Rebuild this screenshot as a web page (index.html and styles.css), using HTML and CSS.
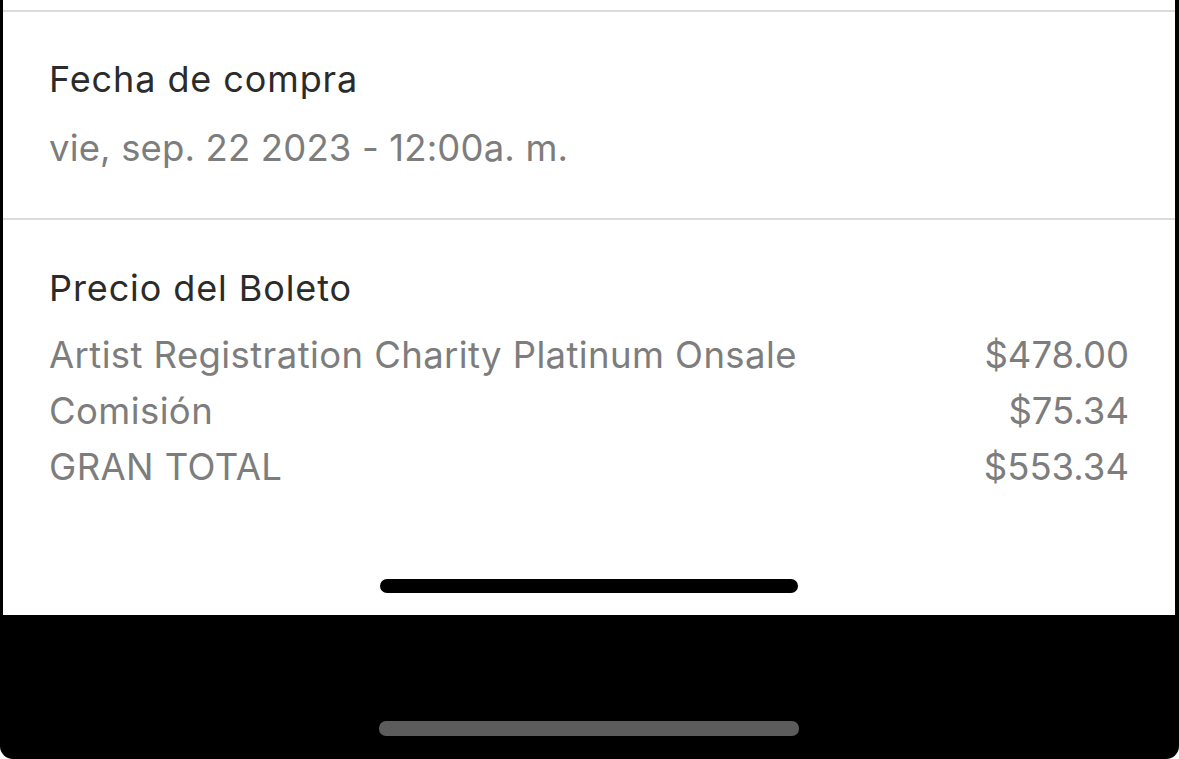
FILE: index.html
```html
<!DOCTYPE html>
<html lang="es">
<head>
  <meta charset="UTF-8">
  <title>Detalle de compra</title>
  <link rel="stylesheet" href="styles.css">
</head>
<body>

  <div class="device">
    <div class="screen">
      <div class="section top">
        <h2>Fecha de compra</h2>
        <p class="muted">vie, sep. 22 2023 - 12:00a. m.</p>
      </div>

      <div class="section">
        <h2>Precio del Boleto</h2>
        <div class="row">
          <span>Artist Registration Charity Platinum Onsale</span>
          <span class="price">$478.00</span>
        </div>
        <div class="row">
          <span>Comisión</span>
          <span class="price">$75.34</span>
        </div>
        <div class="row">
          <span>GRAN TOTAL</span>
          <span class="price">$553.34</span>
        </div>
      </div>

      <div class="home-bar"></div>
    </div>

    <div class="bezel">
      <div class="home-bar gray"></div>
    </div>
  </div>

</body>
</html>
```

FILE: styles.css
```css
body {
  margin: 0;
  background-color: #fff;
  font-family: Inter, "Open Sans", sans-serif;
}
.device {
  width: 1179px;
  height: 759px;
  background-color: #000;
  border-radius: 0 0 13px 13px;
  padding: 0 4px 0 3px;
  box-sizing: border-box;
  display: flex;
  flex-direction: column;
}
.screen {
  background-color: #fff;
  height: 615px;
  padding-top: 10px;
  box-sizing: border-box;
  display: flex;
  flex-direction: column;
}
.section {
  border-top: 2px solid #dcdcdc;
  padding: 0 46px 0 46px;
}
.section.top {
  height: 208px;
  box-sizing: border-box;
}
h2 {
  margin: 46px 0 0 0;
  font-size: 36px;
  font-weight: 400;
  letter-spacing: 0.9px;
  color: #2b2b2b;
  line-height: 44px;
}
.top h2 {
  margin-top: 45px;
}
.muted {
  margin: 25px 0 0 0;
  font-size: 36.5px;
  letter-spacing: 0.15px;
  color: #7d7d7d;
  line-height: 44px;
}
.section h2 + .row {
  margin-top: 17px;
}
.row {
  display: flex;
  justify-content: space-between;
  font-size: 36.5px;
  letter-spacing: 0.4px;
  line-height: 56px;
  color: #7d7d7d;
}
.price {
  letter-spacing: 0;
}
.home-bar {
  width: 418px;
  height: 14px;
  border-radius: 7px;
  background-color: #000;
  margin: auto auto 22px auto;
}
.bezel {
  flex: 1;
  display: flex;
}
.home-bar.gray {
  background-color: #5c5c5c;
  width: 420px;
  height: 15px;
  margin-bottom: 23px;
}
```
